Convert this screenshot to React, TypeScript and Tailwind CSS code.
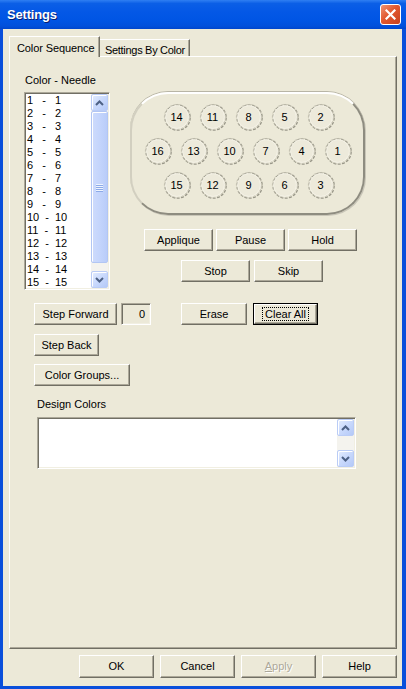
import React from "react";

function Btn({
  w,
  h = 22,
  children,
  focused,
  disabled,
}: {
  w: number;
  h?: number;
  children: React.ReactNode;
  focused?: boolean;
  disabled?: boolean;
}) {
  const base =
    "flex items-center justify-center bg-[#ECE9D8] border border-t-white border-l-white border-r-[#716F64] border-b-[#716F64] shadow-[inset_-1px_-1px_0_#ACA899] shrink-0 whitespace-nowrap";
  if (focused) {
    return (
      <div style={{ width: w, height: h }} className="border border-black shrink-0">
        <div className={base + " w-full h-full"}>
          <div className="border border-dotted border-black px-[2px] leading-[12px]">{children}</div>
        </div>
      </div>
    );
  }
  return (
    <div style={{ width: w, height: h }} className={base}>
      <span className={disabled ? "text-[#ACA899] [text-shadow:1px_1px_0_#fff]" : ""}>{children}</span>
    </div>
  );
}

function Chevron({ up }: { up?: boolean }) {
  return (
    <svg width="9" height="6" viewBox="0 0 9 6">
      <path
        d={up ? "M1 5 L4.5 1.5 L8 5" : "M1 1 L4.5 4.5 L8 1"}
        fill="none"
        stroke="#4D6185"
        strokeWidth="2"
      />
    </svg>
  );
}

function ScrollBtn({ up }: { up?: boolean }) {
  return (
    <div className="w-[17px] h-[17px] shrink-0 rounded-[2px] border border-[#BACCF6] bg-[linear-gradient(135deg,#E3ECFE_0%,#C9D9FC_50%,#B4C9F8_100%)] flex items-center justify-center shadow-[inset_1px_1px_0_#fff]">
      <Chevron up={up} />
    </div>
  );
}

function Thumb({ h }: { h: number }) {
  return (
    <div
      style={{ height: h }}
      className="w-[17px] rounded-[2px] border border-[#B2C6F3] bg-[linear-gradient(90deg,#CEDBFC_0%,#C4D5FC_50%,#B9CCF9_100%)] shadow-[inset_1px_1px_0_#fff] flex flex-col items-center justify-center gap-[1px]"
    >
      {[0, 1, 2, 3].map((i) => (
        <div key={i} className="w-[7px] h-[1px] bg-[#EEF4FE] shadow-[0_1px_0_#8CAAE8]" />
      ))}
    </div>
  );
}

function Circle({ n }: { n: number }) {
  return (
    <div className="relative w-[28px] h-[28px] flex items-center justify-center shrink-0">
      <svg className="absolute inset-0" width="28" height="28" viewBox="0 0 28 28">
        <circle cx="14.6" cy="14.6" r="12.6" fill="none" stroke="#9A988A" strokeWidth="1.3" strokeDasharray="3 1.4" />
        <circle cx="13.8" cy="13.8" r="12.4" fill="none" stroke="#C9C6B6" strokeWidth="1" strokeDasharray="2.6 1.6" />
        <circle cx="14" cy="14" r="11.4" fill="#EDEADB" stroke="#F6F4EA" strokeWidth="0.8" />
      </svg>
      <span className="relative leading-none">{n}</span>
    </div>
  );
}

const sunken =
  "border border-t-[#ACA899] border-l-[#ACA899] border-r-white border-b-white shadow-[inset_1px_1px_0_#716F64,inset_-1px_-1px_0_#F1EFE2]";

export default function App() {
  const items = Array.from({ length: 15 }, (_, i) => i + 1);
  const row1 = [14, 11, 8, 5, 2];
  const row2 = [16, 13, 10, 7, 4, 1];
  const row3 = [15, 12, 9, 6, 3];
  return (
    <div className="w-[406px] h-[689px] flex flex-col bg-[#0A4FDB] font-['Liberation_Sans',Arial,sans-serif] text-[11px] text-black overflow-hidden">
      {/* Title bar */}
      <div className="h-[29px] shrink-0 flex items-center justify-between pl-[7px] pr-[5px] bg-[linear-gradient(to_bottom,#2F7FF2_0%,#0B5FE6_12%,#0458E6_40%,#0055E4_70%,#0150DB_90%,#0046CC_100%)]">
        <span className="text-white font-bold text-[13px] tracking-[-0.2px] [text-shadow:1px_1px_0_#0A1E6E]">
          Settings
        </span>
        <div className="w-[21px] h-[21px] rounded-[3px] border border-white bg-[linear-gradient(135deg,#EE9474_0%,#E2582F_45%,#C8401D_100%)] flex items-center justify-center">
          <svg width="11" height="11" viewBox="0 0 11 11">
            <path d="M1.5 1.5 L9.5 9.5 M9.5 1.5 L1.5 9.5" stroke="#fff" strokeWidth="2.2" strokeLinecap="square" />
          </svg>
        </div>
      </div>

      {/* Client */}
      <div className="flex-1 ml-[3px] mr-[4px] mb-[3px] bg-[#ECE9D8] flex flex-col pl-[6px] pt-[7px]">
        {/* Tabs */}
        <div className="flex items-end h-[20px] relative z-10">
          <div className="w-[91px] h-[21px] -mb-[1px] bg-[#ECE9D8] border-t border-l border-white border-r border-r-[#716F64] shadow-[inset_-1px_0_0_#ACA899] flex items-start pt-[3px] pl-[7px] whitespace-nowrap tracking-[-0.1px]">
            Color Sequence
          </div>
          <div className="w-[90px] h-[17px] bg-[#ECE9D8] border-t border-white border-r border-r-[#716F64] shadow-[inset_-1px_0_0_#ACA899] flex items-start pt-[2px] pl-[5px] whitespace-nowrap tracking-[-0.3px]">
            Settings By Color
          </div>
        </div>

        {/* Panel */}
        <div className="w-[388px] h-[593px] shrink-0 border border-t-white border-l-white border-r-[#716F64] border-b-[#716F64] shadow-[inset_-1px_-1px_0_#ACA899] flex flex-col pl-[14px] pt-[17px]">
          <div className="leading-[13px] pl-[1px]">Color - Needle</div>
          <div className="flex mt-[5px]">
            {/* List */}
            <div className={"w-[86px] h-[198px] bg-white flex " + sunken}>
              <div className="flex-1 pt-[1px] pl-[2px]">
                {items.map((n) => (
                  <div key={n} className="h-[13px] leading-[13px] flex">
                    <span className="inline-block w-[28px] whitespace-pre">{n < 10 ? `${n}   -` : `${n}  -`}</span>
                    <span>{n}</span>
                  </div>
                ))}
              </div>
              <div className="w-[17px] flex flex-col bg-[#F4F3EE] my-[1px] mr-[1px]">
                <ScrollBtn up />
                <Thumb h={152} />
                <div className="flex-1" />
                <ScrollBtn />
              </div>
            </div>

            {/* Right column */}
            <div className="ml-[20px] flex flex-col">
              <div className="w-[235px] h-[123px] rounded-[38px] border-2 border-t-white border-l-[#D2CFC0] border-r-[#8E8C80] border-b-[#8E8C80] shadow-[0_-1px_0_#B8B5A6,1px_1px_0_#C9C6B8] flex flex-col items-center pt-[9px] gap-[6px]">
                <div className="flex gap-[8px] justify-center pl-[2px]">
                  {row1.map((n) => (
                    <Circle key={n} n={n} />
                  ))}
                </div>
                <div className="flex gap-[8px] justify-center">
                  {row2.map((n) => (
                    <Circle key={n} n={n} />
                  ))}
                </div>
                <div className="flex gap-[8px] justify-center pl-[2px]">
                  {row3.map((n) => (
                    <Circle key={n} n={n} />
                  ))}
                </div>
              </div>
              <div className="flex gap-[3px] mt-[14px] ml-[14px]">
                <Btn w={69}>Applique</Btn>
                <Btn w={69}>Pause</Btn>
                <Btn w={69}>Hold</Btn>
              </div>
              <div className="flex gap-[4px] mt-[9px] ml-[51px]">
                <Btn w={69}>Stop</Btn>
                <Btn w={69}>Skip</Btn>
              </div>
            </div>
          </div>

          {/* Row A */}
          <div className="flex mt-[13px] ml-[10px]">
            <Btn w={83}>Step Forward</Btn>
            <div className={"ml-[4px] w-[30px] h-[22px] bg-[#ECE9D8] flex items-center justify-end pr-[5px] " + sunken}>0</div>
            <div className="ml-[30px]">
              <Btn w={66}>Erase</Btn>
            </div>
            <div className="ml-[6px]">
              <Btn w={65} focused>
                Clear All
              </Btn>
            </div>
          </div>
          <div className="flex mt-[9px] ml-[10px]">
            <Btn w={65}>Step Back</Btn>
          </div>
          <div className="flex mt-[8px] ml-[10px]">
            <Btn w={96}>Color Groups...</Btn>
          </div>
          <div className="ml-[13px] mt-[12px] leading-[13px]">Design Colors</div>
          <div className={"ml-[13px] mt-[6px] w-[319px] h-[52px] bg-white flex justify-end " + sunken}>
            <div className="w-[17px] flex flex-col bg-[#F4F3EE] my-[1px] mr-[1px]">
              <ScrollBtn up />
              <div className="flex-1" />
              <ScrollBtn />
            </div>
          </div>
        </div>

        {/* Bottom buttons */}
        <div className="flex justify-end gap-[6px] mt-[6px] pr-[5px]">
          <Btn w={75} h={23}>OK</Btn>
          <Btn w={75} h={23}>Cancel</Btn>
          <Btn w={75} h={23} disabled>
            <span className="underline">A</span>pply
          </Btn>
          <Btn w={75} h={23}>Help</Btn>
        </div>
      </div>
    </div>
  );
}
